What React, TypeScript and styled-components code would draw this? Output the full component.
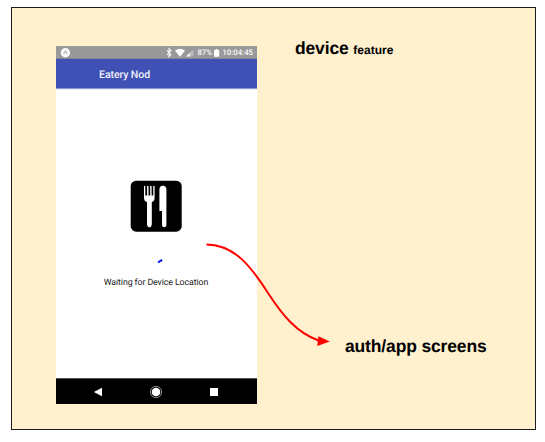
import React from "react";
import styled, { createGlobalStyle } from "styled-components";

const GlobalStyle = createGlobalStyle`
  * { box-sizing: border-box; }
  body { margin: 0; background: #fff; }
`;

const Page = styled.main`
  height: 442px;
  padding: 7px 9px 12px 11px;
  overflow: hidden;
`;

const Board = styled.section`
  position: relative;
  display: flex;
  gap: 38px;
  width: 525px;
  height: 423px;
  padding: 38px 0 0 44px;
  border: 1px solid #1c1c1c;
  background: #fff0ce;
`;

const Phone = styled.div`
  display: flex;
  flex-direction: column;
  width: 201px;
  height: 358px;
  background: #fff;
  font-family: Roboto, sans-serif;
  text-rendering: geometricPrecision;
`;

const StatusBar = styled.div`
  display: flex;
  align-items: center;
  justify-content: space-between;
  height: 13px;
  padding: 0 4px 0 4px;
  background: #999;
  border-bottom: 1px solid #85868f;
  color: #fafafa;
  font-size: 7.8px;
  font-weight: 500;
  line-height: 13px;
`;

const StatusIcons = styled.div`
  display: flex;
  align-items: center;
`;

const StatusText = styled.span<{ $width: number }>`
  display: flex;
  justify-content: flex-end;
  width: ${(p) => p.$width}px;
  white-space: nowrap;
`;

const AppBar = styled.header`
  height: 30px;
  padding-left: 43px;
  background: #3f51b5;
  border-bottom: 1px solid #8e98d0;
  box-shadow: 0 1px 0 #eceef5;
  color: #f1f2fa;
  font-size: 10.6px;
  letter-spacing: -0.1px;
  font-weight: 500;
  line-height: 31px;
`;

const Content = styled.div`
  flex: 1;
  display: flex;
  flex-direction: column;
  align-items: center;
  padding: 91px 1px 0 0;
`;

const Logo = styled.svg`
  display: block;
  width: 52px;
  height: 52px;
`;

const Spinner = styled.svg`
  display: block;
  width: 20px;
  height: 20px;
  margin-top: 24px;
`;

const Message = styled.p`
  margin: 1px 0 0 0;
  color: #222;
  font-size: 8.8px;
  letter-spacing: -0.1px;
  line-height: 12px;
`;

const NavBar = styled.nav`
  display: grid;
  grid-template-columns: repeat(3, 58px);
  justify-content: center;
  justify-items: center;
  align-items: center;
  height: 26px;
  padding-right: 1px;
  background: #000;
  border-top: 1px solid #555;
`;

const Notes = styled.div`
  display: flex;
  flex-direction: column;
  justify-content: space-between;
  height: 318px;
  margin-top: -8px;
  color: #000;
  font-family: "Liberation Sans", Arial, sans-serif;
  text-rendering: geometricPrecision;
`;

const Label = styled.div<{ $indent?: number }>`
  padding-left: ${(p) => p.$indent ?? 0}px;
  font-size: 17.5px;
  letter-spacing: -0.15px;
  font-weight: 700;
  line-height: 20px;
  white-space: nowrap;
`;

const Small = styled.span`
  font-size: 12px;
  letter-spacing: 0;
`;

const FlowArrow = styled.svg`
  position: absolute;
  left: 188px;
  top: 227px;
  width: 140px;
  height: 120px;
`;

export default function App() {
  return (
    <>
      <GlobalStyle />
      <Page>
        <Board>
          <Phone>
            <StatusBar>
              <svg width="11" height="11" viewBox="0 0 11 11">
                <circle cx="5.4" cy="5.7" r="4.7" fill="#fafafa" />
                <path d="M3.5 7.1 L5.4 4 L7.3 7.1" fill="none" stroke="#bbb" strokeWidth="1.2" />
              </svg>
              <StatusIcons>
                <svg width="30" height="11" viewBox="0 0 30 11">
                  <path d="M2 3.4 L6 7.7 L4 9.6 V1.6 L6 3.5 L2 7.8" fill="none" stroke="#f4f4f4" strokeWidth="1.1" />
                  <path d="M10 3.8 Q15 -.2 20 3.8 L15 9.8Z" fill="#fff" />
                  <path d="M21 9.6 L28.3 2.2 V9.6Z" fill="#bcbcbc" />
                  <path d="M21 9.6 L24.6 6 V9.6Z" fill="#fff" />
                </svg>
                <StatusText $width={17}>87%</StatusText>
                <svg width="9" height="11" viewBox="0 0 9 11">
                  <path d="M2 3 H3.6 V2 H5.6 V3 H7.2 V9.8 H2Z" fill="#fff" />
                </svg>
                <StatusText $width={32}>10:04:45</StatusText>
              </StatusIcons>
            </StatusBar>
            <AppBar>Eatery Nod</AppBar>
            <Content>
              <Logo viewBox="0 0 52 52">
                <rect x=".7" y=".7" width="51" height="51" rx="5.5" fill="#000" />
                <path
                  d="M14 6 H15.3 V15.5 H17.1 V6 H18.5 V15.5 H20.2 V6 H21.6 V15.5 H23.3 V6 H24.6 V17.5 Q24.6 21.5 21.8 22 V44.6 Q21.5 47.3 19.4 47.3 Q17.3 47.3 17 44.6 V22 Q14 21.5 14 17.5Z"
                  fill="#fff"
                />
                <path
                  d="M29.4 31 V10 Q29.4 5.8 32.9 5.8 Q36.4 5.8 36.4 10 V44.6 Q36.4 47.3 34.2 47.3 Q32 47.3 32 44.6 V31Z"
                  fill="#fff"
                />
              </Logo>
              <Spinner viewBox="0 0 20 20">
                <path d="M12.1 6.6 Q13.9 4.9 16.2 4" fill="none" stroke="#1414f0" strokeWidth="2" />
              </Spinner>
              <Message>Waiting for Device Location</Message>
            </Content>
            <NavBar>
              <svg width="10" height="10" viewBox="0 0 10 10">
                <path d="M.8 5 L9 .7 V9.3Z" fill="#fff" />
              </svg>
              <svg width="14" height="14" viewBox="0 0 14 14">
                <circle cx="7" cy="7" r="5.7" fill="none" stroke="#aaa" strokeWidth=".8" />
                <circle cx="7" cy="7" r="4.3" fill="#fff" />
              </svg>
              <svg width="10" height="10" viewBox="0 0 10 10">
                <rect x="1" y="1" width="8" height="8" fill="#fff" />
              </svg>
            </NavBar>
          </Phone>
          <Notes>
            <Label>
              device <Small>feature</Small>
            </Label>
            <Label $indent={50}>auth/app screens</Label>
          </Notes>
          <FlowArrow viewBox="200 235 140 120">
            <path
              d="M206.5 244.5 C235 244.5 252 268 268 293 C283 316 297 333 318.5 340.5"
              fill="none"
              stroke="#f00"
              strokeWidth="2"
            />
            <path d="M318.4 336.2 L329.8 341.5 L317.2 346Z" fill="#f00" />
          </FlowArrow>
        </Board>
      </Page>
    </>
  );
}
